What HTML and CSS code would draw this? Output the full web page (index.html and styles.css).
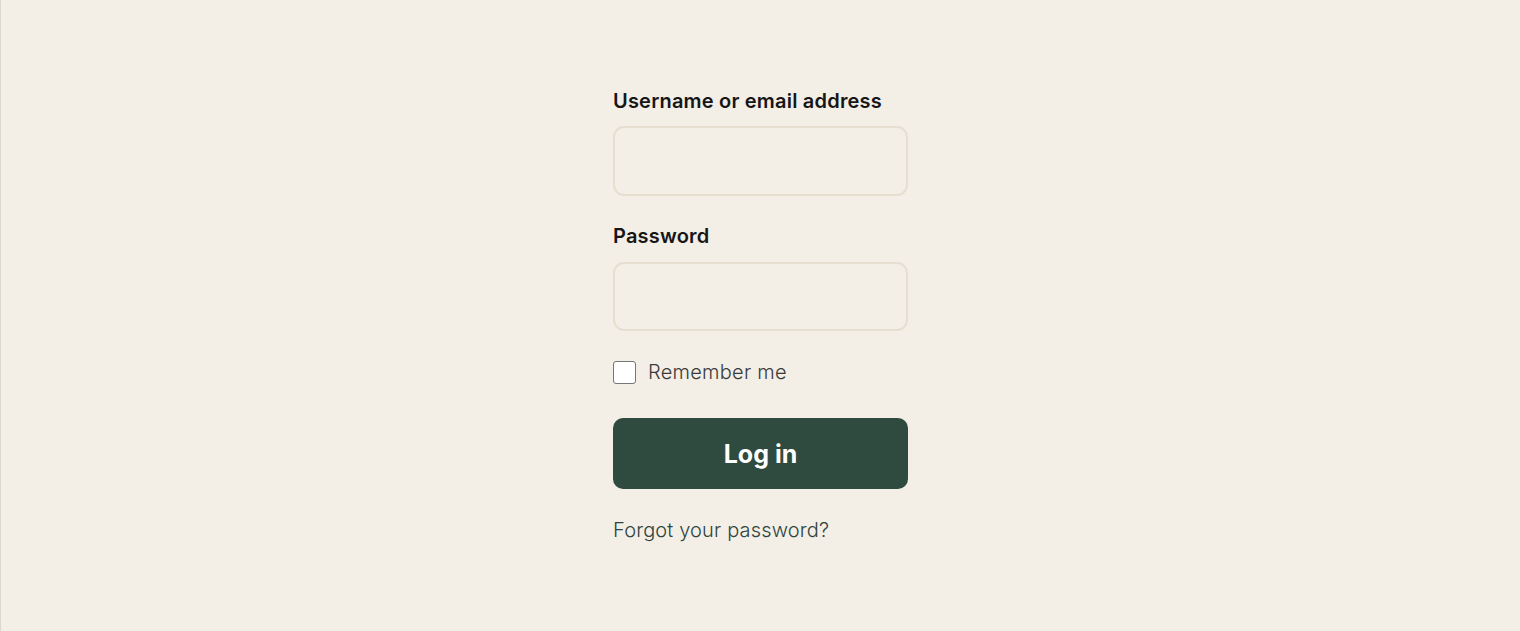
FILE: index.html
```html
<!DOCTYPE html>
<html lang="en">
<head>
<meta charset="utf-8">
<title>Log in</title>
<link rel="stylesheet" href="styles.css">
</head>
<body>
<main class="page">
  <form class="login">
    <label class="label" for="user">Username or email address</label>
    <input class="input input-user" id="user" type="text">
    <label class="label label-second" for="pass">Password</label>
    <input class="input" id="pass" type="password">
    <label class="remember">
      <span class="box"></span>
      <span>Remember me</span>
    </label>
    <button class="submit" type="button">Log in</button>
    <a class="forgot" href="#">Forgot your password?</a>
  </form>
</main>
</body>
</html>
```

FILE: styles.css
```css
html, body {
  margin: 0;
  padding: 0;
  height: 100%;
}
body {
  background: #f3eee6;
  font-family: Inter, "Noto Sans", sans-serif;
  color: #1a1a1a;
}
.page {
  min-height: 100%;
  border-left: 1px solid #dcd8d0;
  box-sizing: border-box;
  display: flex;
  justify-content: center;
  padding-top: 86px;
}
.login {
  width: 295px;
  display: flex;
  flex-direction: column;
}
.label {
  font-size: 20px;
  line-height: 30px;
  font-weight: 600;
  letter-spacing: 0.2px;
  color: #161616;
  margin-bottom: 10px;
}
.label-second {
  margin-top: 25px;
  margin-bottom: 11px;
}
.input {
  box-sizing: border-box;
  height: 69px;
  width: 100%;
  border: 2px solid #e6dfd0;
  border-radius: 11px;
  background: #f3eee6;
  margin: 0;
  padding: 0 16px;
  font: inherit;
}
.input-user {
  height: 70px;
}
.remember {
  display: flex;
  align-items: center;
  gap: 12px;
  margin-top: 30px;
  font-size: 20px;
  line-height: 23px;
  font-weight: 300;
  letter-spacing: 0.25px;
  color: #3b3b3b;
}
.box {
  width: 21px;
  height: 21px;
  border: 1px solid #767676;
  border-radius: 3px;
  background: #fff;
  flex: none;
}
.submit {
  margin-top: 34px;
  height: 71px;
  border: none;
  border-radius: 10px;
  background: #2f4b3f;
  color: #fff;
  font-family: inherit;
  font-size: 25px;
  font-weight: 700;
  cursor: pointer;
}
.forgot {
  margin-top: 26px;
  font-size: 20px;
  line-height: 30px;
  font-weight: 300;
  letter-spacing: 0.15px;
  color: #2f4540;
  text-decoration: none;
}
```
